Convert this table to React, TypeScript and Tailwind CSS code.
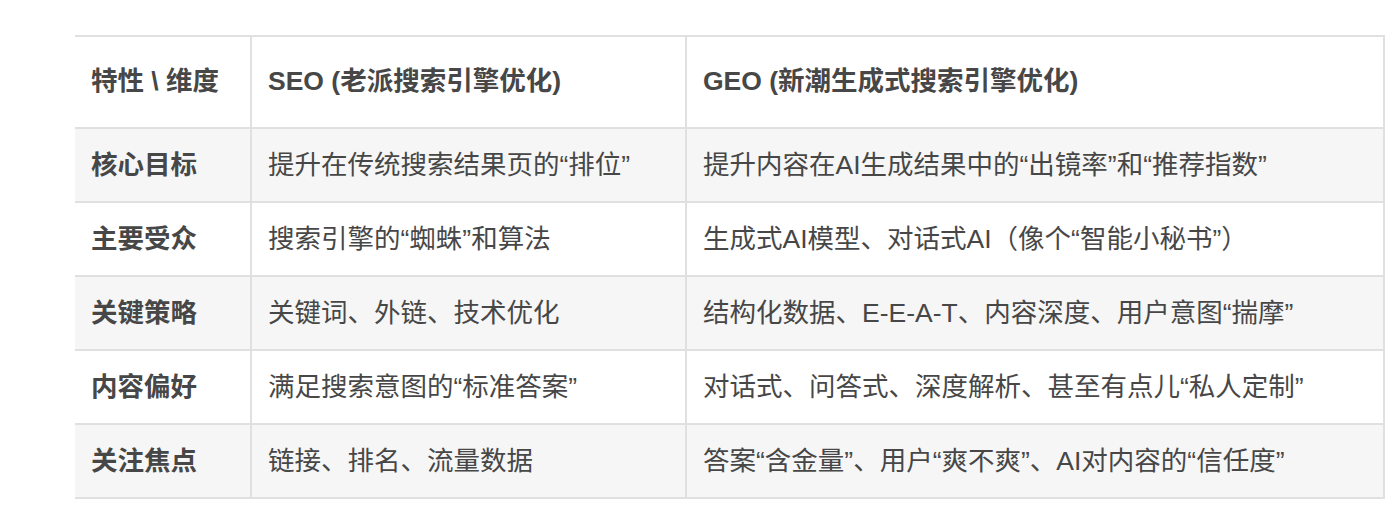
import React from 'react';

const rows: [string, string, string][] = [
  ['核心目标', '提升在传统搜索结果页的“排位”', '提升内容在AI生成结果中的“出镜率”和“推荐指数”'],
  ['主要受众', '搜索引擎的“蜘蛛”和算法', '生成式AI模型、对话式AI（像个“智能小秘书”）'],
  ['关键策略', '关键词、外链、技术优化', '结构化数据、E-E-A-T、内容深度、用户意图“揣摩”'],
  ['内容偏好', '满足搜索意图的“标准答案”', '对话式、问答式、深度解析、甚至有点儿“私人定制”'],
  ['关注焦点', '链接、排名、流量数据', '答案“含金量”、用户“爽不爽”、AI对内容的“信任度”'],
];

export default function App() {
  return (
    <div
      className="w-[1400px] h-[524px] bg-white pt-[35px] pl-[75px] text-[#474747]"
      style={{ fontFamily: '"Liberation Sans", "Noto Sans CJK SC", sans-serif' }}
    >
      <table className="w-[1310px] table-fixed border-collapse text-[26.5px] leading-none">
        <colgroup>
          <col className="w-[176px]" />
          <col className="w-[435px]" />
          <col />
        </colgroup>
        <thead>
          <tr className="h-[92px] border-t-2 border-b-2 border-r-2 border-[#e0e0e0]">
            <th className="pl-4 pb-[2px] text-left font-bold">特性 \ 维度</th>
            <th className="pl-4 pb-[2px] text-left font-bold border-l-2 border-[#e0e0e0]">SEO (老派搜索引擎优化)</th>
            <th className="pl-4 pb-[2px] text-left font-bold border-l-2 border-[#e0e0e0]">GEO (新潮生成式搜索引擎优化)</th>
          </tr>
        </thead>
        <tbody>
          {rows.map((r, i) => (
            <tr
              key={r[0]}
              className={`h-[74px] border-b-2 border-r-2 border-[#e0e0e0] ${i % 2 === 0 ? 'bg-[#f6f6f6]' : 'bg-white'}`}
            >
              <td className="pl-4 font-bold">{r[0]}</td>
              <td className="pl-4 border-l-2 border-[#e0e0e0]">{r[1]}</td>
              <td className="pl-4 border-l-2 border-[#e0e0e0]">{r[2]}</td>
            </tr>
          ))}
        </tbody>
      </table>
    </div>
  );
}
